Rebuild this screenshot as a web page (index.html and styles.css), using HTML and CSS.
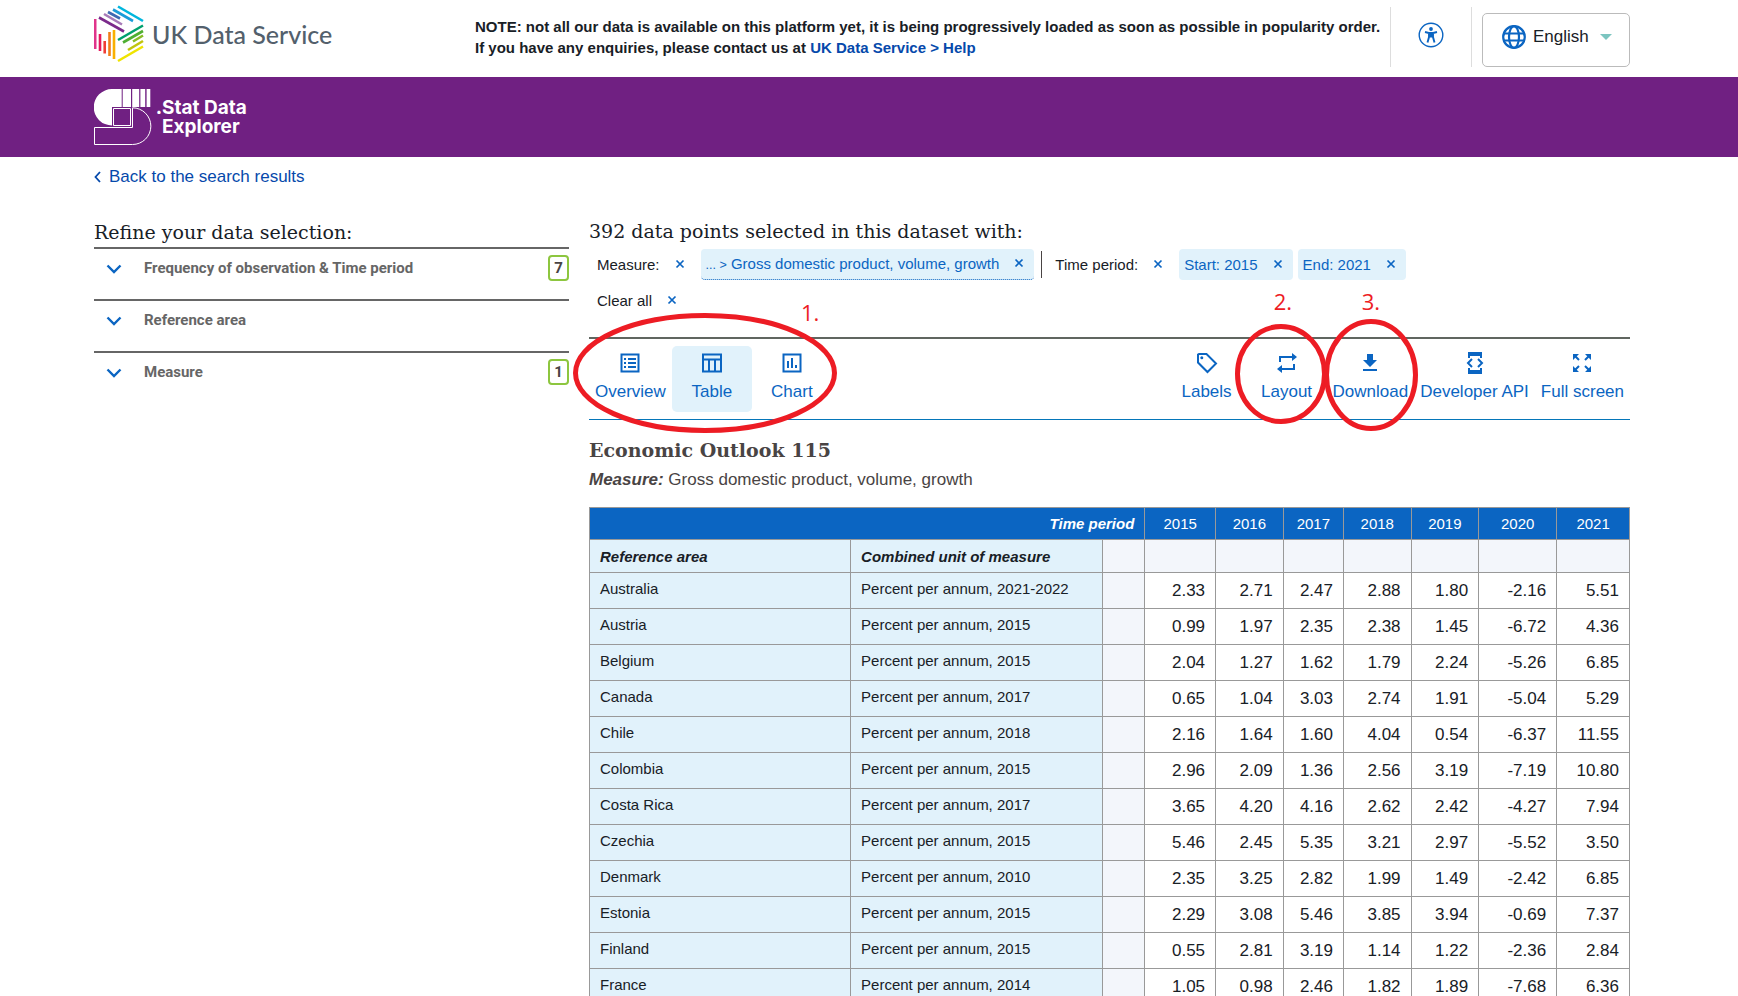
FILE: index.html
```
<!DOCTYPE html>
<html lang="en">
<head>
    <title>.Stat Data Explorer - UK Data Service</title>
    <meta charset="utf-8">
    <meta name="viewport" content="width=device-width, initial-scale=1">
    <link rel="stylesheet" href="styles.css">
</head>
<body>
    <header class="top-bar">
        <a href="#" class="brand" aria-label="UK Data Service">
            <svg width="50" height="58" viewBox="0 0 50 58" fill="none" stroke-width="2.6">
                <path stroke="#e0348b" d="M1.2 14v30"/>
                <path stroke="#e6175c" d="M6 29v17"/>
                <path stroke="#ef3e36" d="M10.700 36v12.500"/>
                <path stroke="#f07d1a" d="M15.500 27v24"/>
                <path stroke="#f9b000" d="M20 25v29"/>
                <path stroke="#7b2a8b" d="M5 12.500l25 14"/>
                <path stroke="#a77bb8" d="M10 9l18 10.500"/>
                <path stroke="#3f69b1" d="M14 7l12 6.500"/>
                <path stroke="#1b9cd8" d="M19 4.500l20 11.500"/>
                <path stroke="#00b6dd" d="M24 1.500l25 14.500"/>
                <path stroke="#00a06e" d="M24 35l25-14.500"/>
                <path stroke="#4fae32" d="M29 37.500l20-11.500"/>
                <path stroke="#86bc25" d="M39 36.500l10-6"/>
                <path stroke="#c0c40d" d="M34 45l15-9"/>
                <path stroke="#efe400" d="M24 56l25-14.500"/>
            </svg>
            <span class="brand-name">UK Data Service</span>
        </a>
        <p class="notice">
            NOTE: not all our data is available on this platform yet, it is being progressively loaded as soon as possible in popularity order.<br>
            If you have any enquiries, please contact us at <a href="#">UK Data Service &gt; Help</a>
        </p>
        <div class="top-tools">
            <button class="a11y-button" aria-label="Accessibility">
                <svg width="26" height="26" viewBox="0 0 26 26">
                    <circle cx="13" cy="13" r="11.800" fill="none" stroke="#0b65c2" stroke-width="1.400"/>
                    <circle cx="13" cy="7" r="1.900" fill="#0b65c2"/>
                    <path fill="none" stroke="#0b65c2" stroke-width="1.900" d="M7 10l4 1v4l-1.500 5.500M19 10l-4 1v4l1.500 5.500M11 11h4M11 12.500h4M11 14.500h4"/>
                </svg>
            </button>
            <button class="language-button">
                <svg width="24" height="24" viewBox="0 0 24 24" fill="none" stroke="#0b65c2" stroke-width="2.2">
                    <circle cx="12" cy="12" r="10.800"/>
                    <ellipse cx="12" cy="12" rx="5" ry="10.800"/>
                    <path d="M2 8.500h20M2 15.500h20"/>
                </svg>
                English
                <svg class="caret" width="12" height="6" viewBox="0 0 12 6"><path fill="#7cc5c0" d="M0 0h12L6 6z"/></svg>
            </button>
        </div>
    </header>

    <div class="banner">
        <a href="#" class="stat-logo">
            <svg width="58" height="58" viewBox="0 0 58 58">
                <path fill="#fff" d="M27.700 1v18h-9.700v18.500A18.200 18.200 0 0 1 18 1zM28.700 1H37v18h-8.300zM38.200 1h7v18h-7zM46.400 1h4.800v18h-4.800zM52.600 1h3.700v18h-3.700z"/>
                <path fill="#702082" d="M18 19.500h20v19H18z"/>
                <path fill="none" stroke="#fff" d="M19.500 20.500h17v17h-17zM38.500 19.800v19.700H.500v17h38a18.300 18.300 0 0 0 0-36.700z"/>
            </svg>
            <span class="stat-name"><span class="dot">.</span>Stat Data<br>Explorer</span>
        </a>
    </div>

    <main class="page">
        <a href="#" class="back-link">
            <svg width="7" height="12" viewBox="0 0 7 12"><path fill="none" stroke="#0549ab" stroke-width="1.800" d="M6 1L1.500 6 6 11"/></svg>
            Back to the search results
        </a>

        <div class="columns">
            <aside class="filters">
                <h2 class="heading">Refine your data selection:</h2>
                <button class="filter">
                    <svg class="chevron" viewBox="0 0 16 10"><path d="M1.500 1.500L8 8l6.500-6.500"/></svg>
                    <span>Frequency of observation &amp; Time period</span>
                    <span class="count">7</span>
                </button>
                <button class="filter">
                    <svg class="chevron" viewBox="0 0 16 10"><path d="M1.500 1.500L8 8l6.500-6.500"/></svg>
                    <span>Reference area</span>
                </button>
                <button class="filter">
                    <svg class="chevron" viewBox="0 0 16 10"><path d="M1.500 1.500L8 8l6.500-6.500"/></svg>
                    <span>Measure</span>
                    <span class="count">1</span>
                </button>
            </aside>

            <section class="content">
                <h2 class="heading">392 data points selected in this dataset with:</h2>
                <div class="chips">
                    <div class="chip-group">
                        <span>Measure:</span>
                        <button class="remove" aria-label="Remove measure"><svg viewBox="0 0 8 8"><path d="M.5.5l7 7M7.500.5l-7 7"/></svg></button>
                        <div class="chip dotted">
                            <span><small>... &gt;</small> Gross domestic product, volume, growth</span>
                            <button class="remove" aria-label="Remove gross domestic product"><svg viewBox="0 0 8 8"><path d="M.5.5l7 7M7.500.5l-7 7"/></svg></button>
                        </div>
                    </div>
                    <div class="chip-group divided">
                        <span>Time period:</span>
                        <button class="remove" aria-label="Remove time period"><svg viewBox="0 0 8 8"><path d="M.5.5l7 7M7.500.5l-7 7"/></svg></button>
                        <div class="chip">
                            <span>Start: 2015</span>
                            <button class="remove" aria-label="Remove start"><svg viewBox="0 0 8 8"><path d="M.5.5l7 7M7.500.5l-7 7"/></svg></button>
                        </div>
                        <div class="chip">
                            <span>End: 2021</span>
                            <button class="remove" aria-label="Remove end"><svg viewBox="0 0 8 8"><path d="M.5.5l7 7M7.500.5l-7 7"/></svg></button>
                        </div>
                    </div>
                </div>
                <div class="chips clear-all">
                    <span>Clear all</span>
                    <button class="remove" aria-label="Clear all"><svg viewBox="0 0 8 8"><path d="M.5.5l7 7M7.500.5l-7 7"/></svg></button>
                </div>

                <div class="toolbar">
                    <div class="tools">
                        <button class="tool">
                            <svg viewBox="0 0 24 24"><path d="M3.500 3.500h17v17h-17z"/><path d="M6 8h2M6 12h2M6 16h2M10 8h8M10 12h8M10 16h8"/></svg>
                            Overview
                        </button>
                        <button class="tool active">
                            <svg viewBox="0 0 24 24"><path d="M3 3.500h18v17H3zM3 8.500h18M9 9v11M15 9v11"/></svg>
                            Table
                        </button>
                        <button class="tool">
                            <svg viewBox="0 0 24 24"><path d="M3.500 3.500h17v17h-17zM8 10v7M12 7v10M16 14v3"/></svg>
                            Chart
                        </button>
                    </div>
                    <div class="tools">
                        <button class="tool">
                            <svg viewBox="0 0 24 24"><path d="M3 3.500v8l9.500 9.500 8.500-8.500L11.500 3H4z"/><circle class="solid" cx="6.800" cy="6.800" r="1.500"/></svg>
                            Labels
                        </button>
                        <button class="tool">
                            <svg viewBox="0 0 24 24"><path d="M5 11V6h13M19 13v5H6"/><path class="solid" d="M17 2l5 4-5 4zM7 14l-5 4 5 4z"/></svg>
                            Layout
                        </button>
                        <button class="tool">
                            <svg viewBox="0 0 24 24"><path class="solid" d="M9 3h6v6h4l-7 7-7-7h4zM5 18h14v2H5z"/></svg>
                            Download
                        </button>
                        <button class="tool">
                            <svg viewBox="0 0 24 24"><path d="M6 7V2h12v5M6 17v5h12v-5M9 8l-4 4 4 4M15 8l4 4-4 4"/><path class="solid" d="M5 1h14v4H5zM5 19h14v4H5z"/></svg>
                            Developer API
                        </button>
                        <button class="tool">
                            <svg viewBox="0 0 24 24"><path d="M4 4l5 5M20 4l-5 5M4 20l5-5M20 20l-5-5"/><path class="solid" d="M3 3h6L3 9zM21 3v6l-6-6zM3 21v-6l6 6zM21 21h-6l6-6z"/></svg>
                            Full screen
                        </button>
                    </div>

                    <!-- numbered callouts over the toolbar -->
                    <svg class="callout callout-1" viewBox="0 0 264 120"><ellipse cx="132" cy="60" rx="129.500" ry="57.500"/></svg>
                    <svg class="callout callout-2" viewBox="0 0 92 100"><ellipse cx="46" cy="50" rx="43.500" ry="47.500"/></svg>
                    <svg class="callout callout-3" viewBox="0 0 94 112"><ellipse cx="47" cy="56" rx="44.500" ry="53.500"/></svg>
                    <span class="callout-number number-1">1.</span>
                    <span class="callout-number number-2">2.</span>
                    <span class="callout-number number-3">3.</span>
                </div>

                <h1 class="title">Economic Outlook 115</h1>
                <p class="subtitle"><strong>Measure:</strong> Gross domestic product, volume, growth</p>

                <table class="data">
                    <colgroup>
                        <col class="col-area"><col class="col-unit"><col class="col-gap">
                        <col class="col-2015"><col class="col-2016"><col class="col-2017"><col class="col-2018"><col class="col-2019"><col class="col-2020"><col class="col-2021">
                    </colgroup>
                    <thead>
                        <tr class="years"><th colspan="3" class="period">Time period</th><th>2015</th><th>2016</th><th>2017</th><th>2018</th><th>2019</th><th>2020</th><th>2021</th></tr>
                        <tr class="dims"><th>Reference area</th><th>Combined unit of measure</th><td></td><td></td><td></td><td></td><td></td><td></td><td></td><td></td></tr>
                    </thead>
                    <tbody>
                        <tr><th>Australia</th><th>Percent per annum, 2021-2022</th><td></td><td>2.33</td><td>2.71</td><td>2.47</td><td>2.88</td><td>1.80</td><td>-2.16</td><td>5.51</td></tr>
                        <tr><th>Austria</th><th>Percent per annum, 2015</th><td></td><td>0.99</td><td>1.97</td><td>2.35</td><td>2.38</td><td>1.45</td><td>-6.72</td><td>4.36</td></tr>
                        <tr><th>Belgium</th><th>Percent per annum, 2015</th><td></td><td>2.04</td><td>1.27</td><td>1.62</td><td>1.79</td><td>2.24</td><td>-5.26</td><td>6.85</td></tr>
                        <tr><th>Canada</th><th>Percent per annum, 2017</th><td></td><td>0.65</td><td>1.04</td><td>3.03</td><td>2.74</td><td>1.91</td><td>-5.04</td><td>5.29</td></tr>
                        <tr><th>Chile</th><th>Percent per annum, 2018</th><td></td><td>2.16</td><td>1.64</td><td>1.60</td><td>4.04</td><td>0.54</td><td>-6.37</td><td>11.55</td></tr>
                        <tr><th>Colombia</th><th>Percent per annum, 2015</th><td></td><td>2.96</td><td>2.09</td><td>1.36</td><td>2.56</td><td>3.19</td><td>-7.19</td><td>10.80</td></tr>
                        <tr><th>Costa Rica</th><th>Percent per annum, 2017</th><td></td><td>3.65</td><td>4.20</td><td>4.16</td><td>2.62</td><td>2.42</td><td>-4.27</td><td>7.94</td></tr>
                        <tr><th>Czechia</th><th>Percent per annum, 2015</th><td></td><td>5.46</td><td>2.45</td><td>5.35</td><td>3.21</td><td>2.97</td><td>-5.52</td><td>3.50</td></tr>
                        <tr><th>Denmark</th><th>Percent per annum, 2010</th><td></td><td>2.35</td><td>3.25</td><td>2.82</td><td>1.99</td><td>1.49</td><td>-2.42</td><td>6.85</td></tr>
                        <tr><th>Estonia</th><th>Percent per annum, 2015</th><td></td><td>2.29</td><td>3.08</td><td>5.46</td><td>3.85</td><td>3.94</td><td>-0.69</td><td>7.37</td></tr>
                        <tr><th>Finland</th><th>Percent per annum, 2015</th><td></td><td>0.55</td><td>2.81</td><td>3.19</td><td>1.14</td><td>1.22</td><td>-2.36</td><td>2.84</td></tr>
                        <tr><th>France</th><th>Percent per annum, 2014</th><td></td><td>1.05</td><td>0.98</td><td>2.46</td><td>1.82</td><td>1.89</td><td>-7.68</td><td>6.36</td></tr>
                    </tbody>
                </table>
            </section>
        </div>
    </main>
</body>
</html>
```

FILE: styles.css
```
* {
    box-sizing: border-box;
}
body {
    margin: 0;
    height: 100vh;
    overflow: hidden;
    background: white;
    color: #182026;
    font-family: "Liberation Sans", Arial, sans-serif;
    font-size: 17px;
}
a {
    color: #0549ab;
    text-decoration: none;
}
button {
    padding: 0;
    border: 0;
    background: none;
    color: inherit;
    font: inherit;
    cursor: pointer;
}
.top-bar, .banner, .page {
    padding: 0 108px 0 94px;
}

/* header */
.top-bar {
    display: flex;
    align-items: flex-start;
    height: 77px;
}
.brand {
    display: flex;
    align-items: center;
    gap: 8px;
    width: 381px;
    padding-top: 5px;
}
.brand-name {
    color: #53606c;
    font-family: Lato, sans-serif;
    font-size: 25px;
    font-weight: 500;
    line-height: 58px;
    white-space: nowrap;
}
.notice {
    flex: 1;
    margin: 0;
    padding-top: 16px;
    font-size: 15px;
    font-weight: bold;
    line-height: 21px;
    white-space: nowrap;
}
.top-tools {
    display: flex;
    padding-top: 7px;
}
.a11y-button {
    width: 82px;
    height: 60px;
    padding-bottom: 4px;
    border: solid #ddd;
    border-width: 0 1px;
}
.a11y-button svg {
    display: block;
    margin: 0 auto;
}
.language-button {
    display: flex;
    align-items: center;
    gap: 7px;
    width: 148px;
    height: 54px;
    margin: 6px 0 0 10px;
    padding: 0 17px 6px 19px;
    border: 1px solid #bbb;
    border-radius: 5px;
}
.caret {
    margin-left: auto;
}
.banner {
    display: flex;
    align-items: center;
    height: 80px;
    background: #702082;
}
.stat-logo {
    display: flex;
    align-items: center;
    gap: 10px;
    color: white;
}
.stat-name {
    position: relative;
    font-family: Inter, sans-serif;
    font-size: 19px;
    font-weight: bold;
    line-height: 19px;
}
.dot {
    position: absolute;
    right: 100%;
}

/* left side */
.page {
    padding-top: 9px;
}
.back-link {
    display: flex;
    align-items: center;
    gap: 8px;
    line-height: 22px;
}
.columns {
    display: grid;
    grid-template-columns: 475px 1fr;
    gap: 20px;
    margin-top: 29px;
}
.heading {
    margin: 0 0 4px;
    font-family: "Roboto Slab", "DejaVu Serif", serif;
    font-size: 19px;
    font-weight: normal;
    line-height: 28px;
    white-space: nowrap;
}
.filters {
    padding-top: 1px;
}
.filters .heading {
    margin-bottom: 1px;
}
.filter {
    display: flex;
    align-items: flex-start;
    width: 100%;
    height: 52px;
    padding: 6px 0 0 12px;
    border-top: 2px solid #666;
    color: #666;
    font-family: Roboto, sans-serif;
    font-size: 15px;
    font-weight: bold;
    line-height: 26px;
    text-align: left;
}
.chevron {
    width: 16px;
    height: 10px;
    margin: 9px 22px 0 0;
    fill: none;
    stroke: #0b65c2;
    stroke-width: 2.4;
}
.count {
    width: 21px;
    margin-left: auto;
    border: 2px solid #8dc63f;
    border-radius: 4px;
    color: #494444;
    line-height: 22px;
    text-align: center;
}

/* selection */
.chips, .chip-group, .chip {
    display: flex;
    align-items: center;
    white-space: nowrap;
}
.chips {
    padding-left: 8px;
    font-size: 15px;
    line-height: 30px;
}
.chip {
    height: 31px;
    margin-right: 5px;
    padding: 0 5px;
    border-radius: 4px;
    background: #e1f2fb;
    color: #0b65c2;
}
.remove + .chip {
    margin-left: 11px;
}
.dotted {
    border-bottom: 1px dotted #0b65c2;
}
.divided::before {
    content: "";
    height: 27px;
    margin: 0 13px 0 2px;
    border-left: 1px solid #494444;
}
.remove {
    display: flex;
    align-items: center;
    justify-content: center;
    width: 20px;
    height: 20px;
    margin: 0 0 2px 10px;
}
.remove svg {
    width: 8px;
    height: 8px;
    overflow: visible;
    fill: none;
    stroke: #0b65c2;
    stroke-width: 1.7;
}
.clear-all {
    margin-top: 6px;
}

/* toolbar */
.toolbar {
    position: relative;
    display: flex;
    justify-content: space-between;
    height: 83px;
    margin-top: 21px;
    padding-top: 7px;
    border-top: 2px solid #606660;
    border-bottom: 1px solid #0576b9;
}
.tools {
    display: flex;
}
.tool {
    display: flex;
    flex-direction: column;
    align-items: center;
    min-width: 80px;
    height: 66px;
    padding: 5px 6px 0;
    border-radius: 5px;
    color: #0b65c2;
    line-height: 34px;
    white-space: nowrap;
}
.tool svg {
    width: 26px;
    height: 24px;
    fill: none;
    stroke: #0b65c2;
    stroke-width: 2;
}
.tool .solid {
    fill: #0b65c2;
    stroke: none;
}
.active {
    background: #e1f2fb;
}

/* callouts */
.callout {
    position: absolute;
    fill: none;
    stroke: #ed1c24;
    stroke-width: 5;
}
.callout-1 {
    left: -16px;
    top: -26px;
    width: 264px;
    height: 120px;
}
.callout-2 {
    right: 303px;
    top: -15px;
    width: 92px;
    height: 100px;
}
.callout-3 {
    right: 212px;
    top: -20px;
    width: 94px;
    height: 112px;
}
.callout-number {
    position: absolute;
    top: -53px;
    color: #ed1c24;
    font-family: "Open Sans", sans-serif;
    font-size: 22px;
    font-weight: 500;
    line-height: 30px;
}
.number-1 {
    left: 212px;
    top: -42px;
}
.number-2 {
    right: 338px;
}
.number-3 {
    right: 250px;
}

/* data */
.title {
    margin: 15px 0 0;
    color: #494444;
    font-family: "Roboto Slab", "DejaVu Serif", serif;
    font-size: 19px;
    line-height: 30px;
}
.subtitle {
    margin: 4px 0 16px;
    color: #494444;
    line-height: 22px;
}
.subtitle strong {
    font-style: italic;
}
.data {
    width: 100%;
    border-collapse: collapse;
    table-layout: fixed;
}
.data th, .data td {
    height: 36px;
    padding: 0 10px;
    border: 1px solid #999;
}
.data th {
    background: #e1f2fb;
    font-size: 15px;
    font-weight: normal;
    text-align: left;
    line-height: 32px;
    vertical-align: top;
}
.data td {
    text-align: right;
}
.data tbody td:nth-child(3), .data .dims td {
    background: #f3f6fb;
}
.data .years th {
    height: 32px;
    background: #0b65c2;
    color: white;
    line-height: 31px;
    text-align: center;
}
.data .dims th, .data .dims td {
    height: 33px;
}
.data .dims th {
    padding-top: 2px;
    line-height: 30px;
}
.data .dims th, .data .years .period {
    font-style: italic;
    font-weight: bold;
}
.data .years .period {
    text-align: right;
}
.col-area { width: 25.1%; }
.col-unit { width: 24.2%; }
.col-gap { width: 4.1%; }
.col-2015 { width: 6.8%; }
.col-2016 { width: 6.5%; }
.col-2017 { width: 5.8%; }
.col-2018 { width: 6.5%; }
.col-2019 { width: 6.5%; }
.col-2020 { width: 7.5%; }
.col-2021 { width: 7%; }
```
